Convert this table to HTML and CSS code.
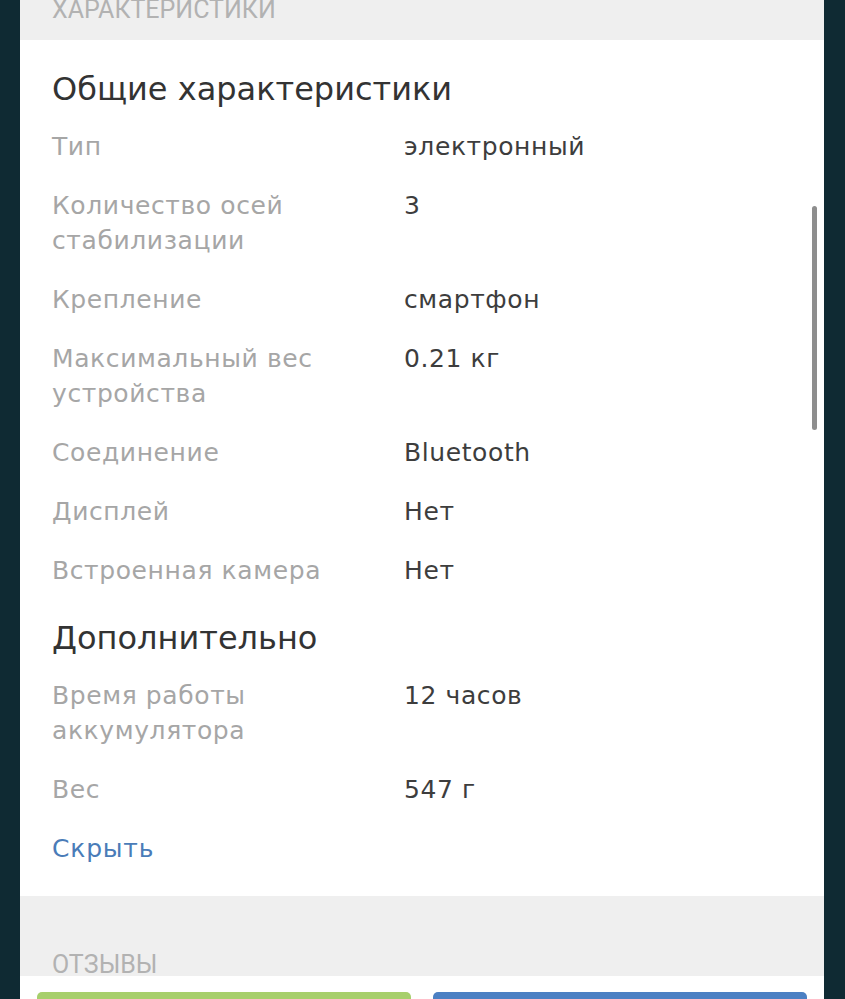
FILE: index.html
```html
<!DOCTYPE html>
<html lang="ru">
<head>
<meta charset="utf-8">
<title>Характеристики</title>
<link rel="stylesheet" href="styles.css">
</head>
<body>
<div class="screen">
  <div class="section-head"><span class="section-title top">ХАРАКТЕРИСТИКИ</span></div>
  <div class="card">
    <h2 class="group-title first">Общие характеристики</h2>
    <dl class="specs">
      <dt>Тип</dt><dd>электронный</dd>
      <dt>Количество осей стабилизации</dt><dd>3</dd>
      <dt>Крепление</dt><dd>смартфон</dd>
      <dt>Максимальный вес устройства</dt><dd>0.21 кг</dd>
      <dt>Соединение</dt><dd>Bluetooth</dd>
      <dt>Дисплей</dt><dd>Нет</dd>
      <dt>Встроенная камера</dt><dd>Нет</dd>
    </dl>
    <h2 class="group-title">Дополнительно</h2>
    <dl class="specs">
      <dt>Время работы аккумулятора</dt><dd>12 часов</dd>
      <dt>Вес</dt><dd>547 г</dd>
    </dl>
    <a class="toggle" href="#">Скрыть</a>
  </div>
  <div class="section-head reviews"><span class="section-title">ОТЗЫВЫ</span></div>
  <div class="scrollbar"></div>
  <div class="action-bar">
    <div class="btn btn-green"></div>
    <div class="btn btn-blue"></div>
  </div>
</div>
</body>
</html>
```
FILE: styles.css
```css
html, body {
  margin: 0;
  padding: 0;
  background: #0f2a33;
  overflow: hidden;
}
body {
  font-family: Roboto, "Noto Sans", "DejaVu Sans", sans-serif;
  padding: 0 21px 0 20px;
}
.screen {
  position: relative;
  background: #efefef;
  height: 999px;
}
.section-head {
  height: 40px;
  overflow: hidden;
  background: #efefef;
  padding-left: 32px;
}
.section-title {
  display: block;
  font-size: 25px;
  line-height: 25px;
  color: #b2b2b2;
  margin-top: -3px;
}
.card {
  background: #fff;
  padding: 29px 32px 30px;
  font-family: "DejaVu Sans", Roboto, sans-serif;
}
.group-title {
  margin: 30px 0 20px;
  font-size: 32px;
  line-height: 40px;
  font-weight: 400;
  color: #333;
}
.group-title.first {
  margin-top: 0;
  margin-bottom: 20px;
}
.specs {
  display: grid;
  grid-template-columns: 352px 1fr;
  row-gap: 24px;
  margin: 0;
  font-size: 25px;
  line-height: 35px;
  letter-spacing: 0.6px;
}
.specs dt {
  color: #a6a6a6;
  padding-right: 30px;
}
.specs dd {
  margin: 0;
  color: #3d3d3d;
}
.toggle {
  display: block;
  margin-top: 24px;
  font-size: 25px;
  line-height: 35px;
  letter-spacing: 0.8px;
  color: #4a7cb8;
  text-decoration: none;
}
.section-head.reviews {
  height: 80px;
  display: flex;
  align-items: flex-end;
}
.section-head.reviews .section-title {
  margin: 0 0 -1px;
}
.scrollbar {
  position: absolute;
  left: 792px;
  top: 206px;
  width: 5px;
  height: 224px;
  border-radius: 3px;
  background: #8e8e8e;
}
.action-bar {
  position: absolute;
  left: 0;
  right: 0;
  top: 976px;
  height: 80px;
  background: #fff;
  display: flex;
  gap: 22px;
  padding: 16px 17px 0;
  box-sizing: border-box;
}
.btn {
  flex: 1;
  height: 56px;
  border-radius: 5px;
}
.btn-green { background: #a7cf6c; }
.btn-blue { background: #4b80c3; }
```
